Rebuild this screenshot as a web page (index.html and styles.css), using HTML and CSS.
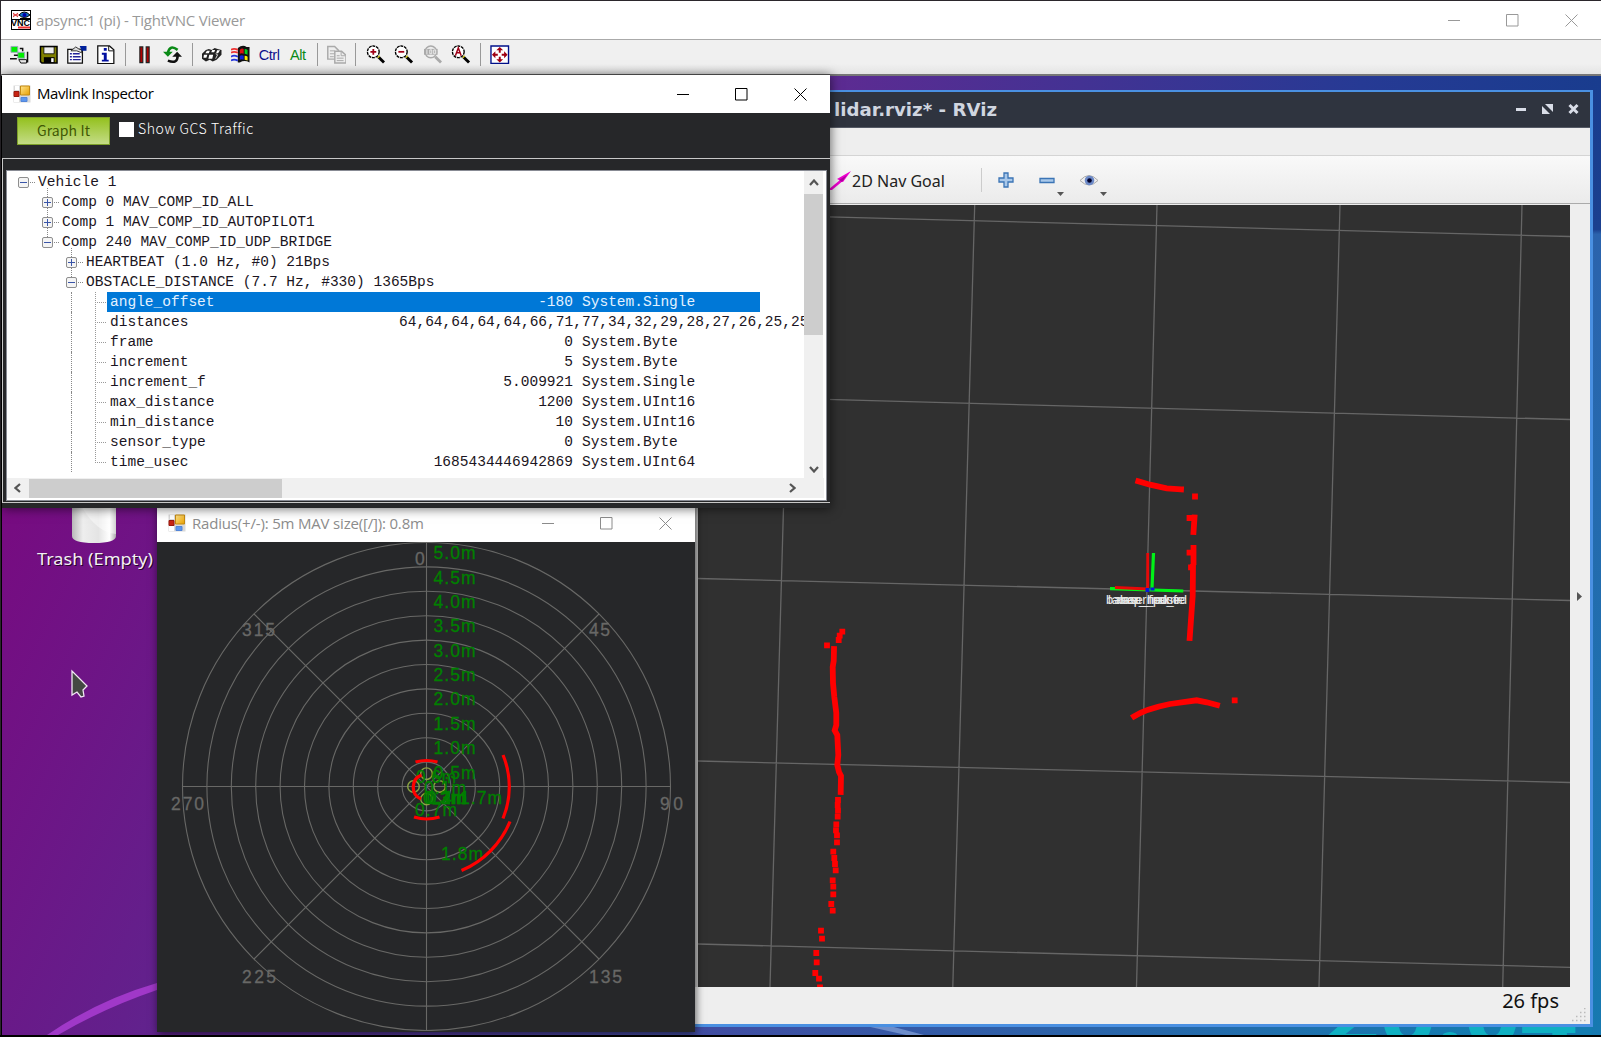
FILE: index.html
```html
<!DOCTYPE html>
<html lang="en">
<head>
<meta charset="utf-8">
<title>apsync:1 (pi) - TightVNC Viewer</title>
<link rel="stylesheet" href="styles.css">
</head>
<body>
<svg width="0" height="0" class="defs">
  <defs>
    <symbol id="min" viewBox="0 0 13 13"><path d="M0 6.5h12" stroke="currentColor" fill="none"/></symbol>
    <symbol id="max" viewBox="0 0 13 13"><path d="M.5 .5h11.5v11.5h-11.5z" stroke="currentColor" fill="none"/></symbol>
    <symbol id="close" viewBox="0 0 13 13"><path d="M.5 .5l12 12M12.5 .5l-12 12" stroke="currentColor" fill="none"/></symbol>
    <linearGradient id="gold" x2="1" y2="1"><stop stop-color="#ffe48c"/><stop offset="1" stop-color="#e8a000"/></linearGradient>
    <symbol id="form" viewBox="0 0 18 18">
      <path d="M.5 .5h17v17h-17z" fill="#d9d9d9"/><path d="M2 1h4v4h-4zM1 12h5v5h-5z" fill="#fff"/>
      <path d="M1 6.500h5v5h-5z" fill="#c82414" stroke="#961a10"/>
      <path d="M7.500 1h9v9h-9z" fill="url(#gold)" stroke="#c58a10"/>
      <path d="M8 12.500h6v4h-6z" fill="#5b96ee" stroke="#5285d8"/>
    </symbol>
    <symbol id="lens" viewBox="0 0 20 20">
      <path d="M12.500 12l6 6" stroke="currentColor" stroke-width="3"/><path d="M12 13l2-2" stroke="#d8cc20" stroke-width="1.500"/>
      <circle cx="7.500" cy="7" r="6" fill="#fff" stroke="currentColor" stroke-width="1.400" stroke-dasharray="3 .8"/>
    </symbol>
  </defs>
</svg>
<div class="viewer">
  <header class="titlebar viewer-title">
    <svg class="app-icon" width="20" height="20" viewBox="0 0 20 20"><path d="M0 0h20v20H0z" fill="#000"/><path d="M1 1h8v8H1zM9 1h10v7H9zM1 10h18v9H1z" fill="#fff"/><path d="M2 3l5 4M7 3L2 7M2 5h6" stroke="#d33"/><path d="M8 5q5-6 11 0q-6 5-11 0z" fill="#17c" stroke="#000"/><circle cx="13.500" cy="5" r="2" fill="#00a"/><text x="0" y="15.500" class="vnc" textLength="19">VNC</text><path d="M7 17.500h12" stroke="#e33" stroke-width="2"/></svg>
    <span class="viewer-name">apsync:1 (pi) - TightVNC Viewer</span>
    <div class="controls"><i><svg><use href="#min"/></svg></i><i><svg><use href="#max"/></svg></i><i><svg><use href="#close"/></svg></i></div>
  </header>
  <nav class="toolbar">
    <b><svg viewBox="0 0 20 20"><path d="M1 1.500h7v6H1zM8 7.500h7v6H8z" fill="#0e0" stroke="#9ab"/><path d="M0 14h7M4 10.500h4M10 3.500h3v3M18 7v11" stroke="#111" stroke-width="1.500" fill="none"/><path d="M9 15h8v3.500h-6z" fill="#e8e8e8" stroke="#111"/></svg></b>
    <b><svg viewBox="0 0 20 20"><path d="M1.500 1.500h17v17H3l-1.500-1.500z" fill="#808000" stroke="#000" stroke-width="1.500"/><path d="M5 2h10.500v7H5z" fill="#eee" stroke="#000" stroke-width=".8"/><path d="M5 12.500h11v6H5z" fill="#000"/><path d="M12.500 13.500h2.500v4h-2.500z" fill="#fff"/></svg></b>
    <b><svg viewBox="0 0 20 20"><path d="M.8 4.500h15v14H.8z" fill="#fff" stroke="#111" stroke-width="1.300"/><path d="M3 9h2m1 0h7M3 12h2m1 0h8M3 15h2m1 0h8" stroke="#229" stroke-width="1.500"/><path d="M4 6l5-4 3 2 3 1v3l-5-2z" fill="#ddd" stroke="#333"/><path d="M13 1h7v5h-5z" fill="#00209a"/></svg></b>
    <b><svg viewBox="0 0 20 20"><path d="M1.800 1h12l4.500 4v14H1.800z" fill="#fff" stroke="#111" stroke-width="1.300"/><path d="M13 1v5h5" fill="none" stroke="#111"/><path d="M8 3h3v3H8zM6 8h5v7h2v2H6v-2h2v-5H6z" fill="#000fa0"/></svg></b>
    <u></u>
    <b><svg viewBox="0 0 20 20"><path d="M5 2h3v16H5zM11.500 2h3v16h-3z" fill="#b00000" stroke="#222" stroke-width="1.200"/></svg></b>
    <b><svg viewBox="0 0 20 20"><path d="M15 5q-8-6-10 3" fill="none" stroke="#0a8a16" stroke-width="2.600"/><path d="M0 7h10l-5 5z" fill="#0a8a16"/><path d="M5 16q10 4 10-5" fill="none" stroke="#111" stroke-width="2.600"/><path d="M9.500 12l5-5 5 5z" fill="#111"/></svg></b>
    <u></u>
    <b><svg viewBox="0 0 20 20"><path d="M0 9l4-4 3-1 3 1 3-2 3 1 4 1v5l-5 5-4 2-3-2-4 2-4-3z" fill="#222"/><path d="M5 6h3l-1 2.500H3.500zM10.500 5h3l-1 2.500H9.500zM15.500 5.500h3l-2 3h-2zM2 10h3.500l-1 3H1.500zM7.500 10h4l-1 4H6.500z" fill="#fff"/><path d="M14 9l2 1-2 4" stroke="#ddd" fill="none"/></svg></b>
    <b><svg viewBox="0 0 20 20"><path d="M7 3q5-4 9-1h3v16q-5-3-10 0H7z" fill="#111"/><path d="M9 5q2-2 4-1v5q-2-1-4 0z" fill="#d11"/><path d="M14 4q2 0 3 1v5q-2-1-3-1z" fill="#0c2"/><path d="M9 11q2-1 4 0v4q-2-1-4 0z" fill="#12d"/><path d="M14 11q2 0 3 1v4q-2-1-3-1z" fill="#fe0"/><path d="M0 5q3-2 7 0M0 8q3-2 7 0" stroke="#e33" stroke-width="1.800" fill="none"/><path d="M0 12q3-2 7 0M0 16q3-2 7 0" stroke="#23d" stroke-width="1.800" fill="none"/></svg></b>
    <b class="ctrl">Ctrl</b>
    <b class="alt">Alt</b>
    <u></u>
    <b><svg viewBox="0 0 20 20"><path d="M.8 1.500h7l4 4v9h-11z" fill="#eee" stroke="#aaa" stroke-width="1.500"/><path d="M3 6h5M3 9h5M3 12h4" stroke="#aaa"/><path d="M8 6.500h7l4.500 4v8H8z" fill="#eee" stroke="#aaa" stroke-width="1.500"/><path d="M14.500 7v4h4.500M10 11h3M10 13.500h7M10 16h7" stroke="#aaa" fill="none"/></svg></b>
    <u></u>
    <b><svg viewBox="0 0 20 20"><use href="#lens"/><path d="M4.500 7h6M7.500 4v6" stroke="#a00018" stroke-width="1.800"/></svg></b>
    <b><svg viewBox="0 0 20 20"><use href="#lens"/><path d="M4.500 7h6" stroke="#a00018" stroke-width="1.800"/></svg></b>
    <b><svg viewBox="0 0 20 20"><path d="M12.500 12l6 6" stroke="#aaa" stroke-width="3"/><circle cx="8" cy="7" r="6" fill="#eee" stroke="#aaa" stroke-width="1.500"/><path d="M1 4h14v6H1z" fill="#aaa"/><path d="M4 4.500v5M7 5h2v4H7zM11 5h2v4h-2z" stroke="#eee" fill="none"/></svg></b>
    <b><svg viewBox="0 0 20 20"><use href="#lens"/><path d="M4.500 11l3-8 3 8M5.500 8h4" stroke="#a00018" stroke-width="1.500" fill="none"/></svg></b>
    <u></u>
    <b><svg viewBox="0 0 20 20"><path d="M1 1h18v18H1z" fill="#fff" stroke="#00108a" stroke-width="1.400"/><path d="M10 2l3.500 3.500h-7zM10 18l3.500-3.500h-7zM2 10l3.500-3.500v7zM18 10l-3.500-3.500v7z" fill="#a00012"/><path d="M10 4v4M10 12v4M4 10h4M12 10h4" stroke="#a00012" stroke-width="2"/></svg></b>
  </nav>
  <main class="desktop">
    <svg class="wallpaper" width="1599" height="959" viewBox="2 76 1599 959">
      <defs>
        <linearGradient id="wall" gradientUnits="userSpaceOnUse" x1="0" y1="480" x2="1420" y2="1180"><stop stop-color="#780a80"/><stop offset=".22" stop-color="#63208c"/><stop offset=".5" stop-color="#4647a0"/><stop offset="1" stop-color="#137cb0"/></linearGradient>
        <linearGradient id="wtop"><stop offset=".5" stop-color="#602a92"/><stop offset=".85" stop-color="#263a94"/><stop offset="1" stop-color="#193c8e"/></linearGradient>
        <linearGradient id="wside" x2="0" y2="1"><stop stop-color="#193c8e"/><stop offset=".16" stop-color="#1b408f"/><stop offset=".165" stop-color="#2b63ad"/><stop offset="1" stop-color="#1679b0"/></linearGradient>
        <linearGradient id="can"><stop stop-color="#b9b9b9"/><stop offset=".25" stop-color="#eee"/><stop offset=".6" stop-color="#e4e4e4"/><stop offset=".85" stop-color="#fff"/><stop offset="1" stop-color="#aaa"/></linearGradient>
      </defs>
      <path d="M2 76h1599v959H2z" fill="url(#wall)"/>
      <path d="M2 76h1599v16H2z" fill="url(#wtop)"/>
      <path d="M1592 76h9v959h-9z" fill="url(#wside)"/>
      <path d="M47 1035Q98 1000 157 983v7Q104 1008 58 1035z" fill="#a038c8"/>
      <path d="M866 1026h24l34 9h-18z" fill="#6d8dca"/>
      <text x="1323" y="1045" class="version" textLength="254" lengthAdjust="spacingAndGlyphs">20.04</text>
      <path d="M72 500h44v36q0 7-22 7t-22-7z" fill="url(#can)"/>
      <path d="M78 500q16 32 38 34v-34z" fill="#fff" opacity=".45"/>
      <path d="M72 671v24l5-3 4 5 3-1-1-6 4-4z" fill="#444843" stroke="#f2e6f4" stroke-width="1.300"/>
      <text x="38" y="566" class="trash-shadow" textLength="116" lengthAdjust="spacingAndGlyphs" aria-hidden="true">Trash (Empty)</text>
      <text x="37" y="565" class="trash" textLength="116" lengthAdjust="spacingAndGlyphs">Trash (Empty)</text>
    </svg>
  </main>
</div>

<section class="rviz">
  <header><span>lidar.rviz* - RViz</span>
    <svg width="64" height="12" viewBox="0 0 64 12"><path d="M0 5h10v3H0z"/><path d="M26 3v8h8zM37 9V1h-8z"/><path d="M53.500 2l8 8M61.500 2l-8 8" class="x"/></svg>
  </header>
  <div class="menu"></div>
  <div class="tools">
    <svg class="arrow" width="23" height="20" viewBox="0 0 23 20"><path d="M0 20L12 10" stroke="#f000d0" stroke-width="2.500"/><path d="M7 9l14-8-8 11z" fill="#f000d0"/><path d="M9 10l8-5-5 7z" fill="#b000a0"/></svg>
    <span>2D Nav Goal</span>
    <u></u>
    <svg class="plus" width="16" height="16" viewBox="0 0 16 16"><path d="M6 1h4v5h5v4h-5v5H6v-5H1V6h5z"/></svg>
    <svg class="minus" width="24" height="26" viewBox="0 0 24 26"><path d="M1 8.500h14v4H1z"/><path class="drop" d="M18 22h7l-3.500 4z"/></svg>
    <svg class="eye" width="28" height="26" viewBox="0 0 28 26"><path d="M1 10.500q9-10 18 0q-9 9-18 0z" fill="#eee" stroke="#aaa"/><circle cx="10.500" cy="10.500" r="4.800" fill="#6d8ac8"/><circle cx="10.500" cy="10.500" r="2.300" fill="#000028"/><path class="drop" d="M21 22h7l-3.500 4z"/></svg>
  </div>
  <div class="view">
    <svg width="872" height="782" viewBox="698 205 872 782">
      <path d="M698 205h872v782H698z" fill="#303030"/>
      <path class="grid" d="M792 205L770 987M974.700 205L952.800 987M1157 205L1136.500 987M1340 205L1319 987M1522 205L1502.700 987M698 213.500L1570 236.500M698 396L1570 419.500M698 578.500L1570 600.500M698 761L1570 782.500M698 944L1570 967.300"/>
      <g class="scan">
        <path d="M834 649L833.700 661 832.700 667 833 683 834.300 697 836.300 713 836.300 725 834.700 730.300 837.300 735 838.300 755 837.300 765 839 772 841 776 840.700 792"/>
        <path d="M842.300 631.700h0M839.700 635.700h0M838.700 640h0M827 645.300h0M838 800h0M837.700 805h0M838 810.700h0M837.700 816.700h0M836.300 824.300h0M836 830.300h0M837 835.300h0M837 842.300h0M833.300 851.700h0M834.300 858h0M835 864h0M835.700 870.300h0M832.700 880.300h0M833.300 886.700h0M833.300 894.300h0M831.300 904h0M832.700 910.700h0M821 930.700h0M822 938.700h0M816.300 953h0M816.700 962.300h0M815.300 973h0M819 978.700h0M820 987.500h0"/>
        <path d="M1138.300 481.300L1150 484.700 1166.700 488.300 1181 489.300M1195 496.500h0M1189.500 518h0M1194.500 517.500L1193.500 532M1193.500 548v14M1189.500 552.700h0M1191 567.300h0M1193 567L1192.700 596 1189.700 638M1134 716.300Q1145 709 1170 704L1196.700 700.300 1206.700 702.300 1217 705M1234.700 700.300h0"/>
      </g>
      <path d="M1110 588.700L1183.300 591M1153.500 553L1152 588" stroke="#00f218" stroke-width="3.200"/>
      <path d="M1115 587.500L1148 589M1147.700 553V589" stroke="#e80808" stroke-width="2.800"/>
      <path d="M1145.500 588h4v4h-4zM1150.500 587.500h4v3h-4z" fill="#0818d8"/>
      <g class="frames"><text x="1106" y="604" textLength="64">base_link</text><text x="1108" y="604" textLength="77">laser_frame</text><text x="1117" y="604" textLength="70">map_ned_frd</text><text x="1120" y="604" textLength="60">laser_pose</text></g>
    </svg>
    <svg class="expander" width="5" height="9" viewBox="0 0 5 9"><path d="M0 0l5 4.500L0 9z" fill="#555"/></svg>
  </div>
  <footer><span>26 fps</span><svg class="grip" width="14" height="14" viewBox="0 0 14 14"><path d="M0 12.500h14M4 8.500h10M8 4.500h6M12 .5h2" stroke="#bbb" stroke-width="1.500" stroke-dasharray="1.500 2.500"/></svg></footer>
</section>

<section class="window radar">
  <header class="titlebar">
    <svg class="form-icon" width="18" height="18"><use href="#form"/></svg><span class="radar-name">Radius(+/-): 5m MAV size([/]): 0.8m</span>
    <div class="controls"><i><svg><use href="#min"/></svg></i><i><svg><use href="#max"/></svg></i><i><svg><use href="#close"/></svg></i></div>
  </header>
  <svg width="538" height="489" viewBox="157 542 538 489">
    <g class="rings"><circle cx="426.500" cy="786.500" r="24.400"/><circle cx="426.500" cy="786.500" r="48.800"/><circle cx="426.500" cy="786.500" r="73.200"/><circle cx="426.500" cy="786.500" r="97.600"/><circle cx="426.500" cy="786.500" r="122"/><circle cx="426.500" cy="786.500" r="146.400"/><circle cx="426.500" cy="786.500" r="170.800"/><circle cx="426.500" cy="786.500" r="195.200"/><circle cx="426.500" cy="786.500" r="219.600"/><circle cx="426.500" cy="786.500" r="244"/>
    <path d="M182.500 786.500h488M426.500 542.500v488M254 614L599 959M599 614L254 959"/></g>
    <g class="bearing"><text x="415" y="564.500" textLength="10">0</text><text x="589" y="635.500" textLength="21">45</text><text x="660" y="810" textLength="23">90</text><text x="589" y="982.500" textLength="33">135</text><text x="242" y="982.500" textLength="34">225</text><text x="171" y="810" textLength="33">270</text><text x="242" y="635.500" textLength="33">315</text></g>
    <g class="copter"><circle cx="426.500" cy="773.700" r="5.800"/><circle cx="413.500" cy="786.500" r="5.800"/><circle cx="439.500" cy="786.500" r="5.800"/><circle cx="426.500" cy="799" r="5.800"/></g>
    <g class="range"><text x="433.500" y="558.500" textLength="42">5.0m</text><text x="433.500" y="583.500" textLength="42">4.5m</text><text x="433.500" y="607.500" textLength="42">4.0m</text><text x="433.500" y="632" textLength="42">3.5m</text><text x="433.500" y="656.500" textLength="42">3.0m</text><text x="433.500" y="681" textLength="42">2.5m</text><text x="433.500" y="705" textLength="42">2.0m</text><text x="433.500" y="730" textLength="42">1.5m</text><text x="433.500" y="753.500" textLength="42">1.0m</text><text x="433.500" y="778.500" textLength="42">0.5m</text>
    <text x="416" y="782.500" textLength="40">0.6m</text><text x="424" y="793.500" textLength="42">0.1m</text><text x="423" y="803.500" textLength="42">0.3m</text><text x="425" y="804" textLength="41">0.2m</text><text x="427" y="803.500" textLength="40">0.4m</text><text x="460" y="803.500" textLength="42">1.7m</text><text x="415" y="816" textLength="42">0.7m</text><text x="441" y="859.500" textLength="42">1.8m</text></g>
    <path class="hits" d="M415.500 762q11-3 22 0M414 817q12.500 4 25.500 0M421.500 775A13 13 0 0 0 421 799M503 755A83 83 0 0 1 503 818.500M510 821.500A91 91 0 0 1 461.500 870.500"/>
  </svg>
</section>

<section class="window inspector">
  <header class="titlebar">
    <svg class="form-icon" width="18" height="18"><use href="#form"/></svg><span class="inspector-name">Mavlink Inspector</span>
    <div class="controls"><i><svg><use href="#min"/></svg></i><i><svg><use href="#max"/></svg></i><i><svg><use href="#close"/></svg></i></div>
  </header>
  <div class="options"><button>Graph It</button><span class="check"></span><label>Show GCS Traffic</label></div>
  <div class="panel"><div class="tree-box">
    <ul class="tree">
      <li><em class="box"></em>Vehicle 1</li>
      <li class="l1"><em class="box add"></em>Comp 0 MAV_COMP_ID_ALL</li>
      <li class="l1"><em class="box add"></em>Comp 1 MAV_COMP_ID_AUTOPILOT1</li>
      <li class="l1"><em class="box"></em>Comp 240 MAV_COMP_ID_UDP_BRIDGE</li>
      <li class="l2"><em class="box add"></em>HEARTBEAT (1.0 Hz, #0) 21Bps</li>
      <li class="l2"><em class="box"></em>OBSTACLE_DISTANCE (7.7 Hz, #330) 1365Bps</li>
      <li class="l3"><p class="selected"><span>angle_offset</span><span>-180</span><span>System.Single</span></p></li>
      <li class="l3"><p class="wide"><span>distances</span><span>64,64,64,64,64,66,71,77,34,32,29,28,27,26,25,25</span></p></li>
      <li class="l3"><p><span>frame</span><span>0</span><span>System.Byte</span></p></li>
      <li class="l3"><p><span>increment</span><span>5</span><span>System.Byte</span></p></li>
      <li class="l3"><p><span>increment_f</span><span>5.009921</span><span>System.Single</span></p></li>
      <li class="l3"><p><span>max_distance</span><span>1200</span><span>System.UInt16</span></p></li>
      <li class="l3"><p><span>min_distance</span><span>10</span><span>System.UInt16</span></p></li>
      <li class="l3"><p><span>sensor_type</span><span>0</span><span>System.Byte</span></p></li>
      <li class="l3 last"><p><span>time_usec</span><span>1685434446942869</span><span>System.UInt64</span></p></li>
    </ul>
    <div class="vbar"><svg width="10" height="8" viewBox="0 0 10 8"><path d="M1 6l4-4.500L9 6"/></svg><div></div><svg width="10" height="8" viewBox="0 0 10 8"><path d="M1 2l4 4.500L9 2"/></svg></div>
    <div class="hbar"><svg width="8" height="10" viewBox="0 0 8 10"><path d="M6 1L1.500 5 6 9"/></svg><div></div><svg width="8" height="10" viewBox="0 0 8 10"><path d="M2 1l4.500 4L2 9"/></svg></div>
  </div></div>
</section>
</body>
</html>
```
FILE: styles.css
```css
* { box-sizing: border-box; }
body { margin: 0; width: 1601px; height: 1037px; overflow: hidden; position: relative; background: #000; font-family: "Open Sans", sans-serif; }
.defs { position: absolute; }
.viewer { width: 1601px; height: 1035px; border-top: 1px solid #2b272c; border-left: 1px solid #2b272c; display: flex; flex-direction: column; }
.titlebar { display: flex; align-items: center; background: #fff; font-size: 15px; white-space: nowrap; flex: none; }
.viewer-title { height: 38px; padding-left: 10px; color: #999; }
.viewer-name { margin-left: 5px; letter-spacing: -.2px; margin-top: -1px; }
.vnc { font: bold 9px "Liberation Sans", sans-serif; }
.controls { margin-left: auto; display: flex; color: inherit; }
.controls i { width: 58px; display: flex; padding-left: 22px; }
.controls i:last-child { width: 59px; padding-left: 23px; }
.controls svg { width: 13px; height: 13px; }
.toolbar { height: 37px; border-top: 1px solid #aaa; border-bottom: 2px solid #777; background: linear-gradient(#f0f0f0 70%, #e4e4e4); display: flex; align-items: center; padding: 0 0 5px 4.700px; flex: none; }
.toolbar b { width: 28.600px; display: flex; justify-content: center; font-weight: 400; font-size: 15px; color: #000; flex: none; }
.toolbar b svg { width: 19.500px; height: 19.500px; flex: none; }
.toolbar u { width: 10.200px; height: 23px; border-left: 1px solid #999; margin: 0 -4.500px 0 4.500px; flex: none; }
.toolbar .ctrl, .toolbar .alt { font-family: "Liberation Sans", sans-serif; font-size: 14.500px; color: #10108c; letter-spacing: -.5px; }
.toolbar .alt { color: #0a8a16; }
.desktop { flex: 1; padding-left: 1px; }
.wallpaper { display: block; }
.version { font: 700 84px "Noto Sans", sans-serif; fill: #0fb0c2; }
.trash, .trash-shadow { font: 17px "Noto Sans", sans-serif; fill: #f4eef6; }
.trash-shadow { fill: #220428; }

.rviz { position: absolute; left: 600px; top: 90px; width: 993px; height: 937px; border: solid #4a90e2; border-width: 2px 3px 3px; background: #eee; display: flex; flex-direction: column; }
.rviz header { height: 36px; background: #2f343f; border-bottom: 1px solid #555a66; display: flex; align-items: center; justify-content: space-between; padding: 0 10px 1px 231px; color: #d0d6e0; font: bold 18.200px "DejaVu Sans", sans-serif; }
.rviz header path { fill: #d9dde8; }
.rviz header .x { stroke: #d9dde8; stroke-width: 3; }
.menu { height: 28px; border-bottom: 1px solid #d4d4d4; }
.tools { height: 48px; background: linear-gradient(#f9f9f9, #ebebeb); border-bottom: 1px solid #aaa; display: flex; align-items: center; padding: 1px 0 0 227px; color: #222; font: 16px "Noto Sans", sans-serif; }
.tools span { width: 101px; margin: 1px 0 0 -1px; }
.tools u { height: 24px; border-left: 1px solid #ccc; margin: 0 16px 0 28px; }
.plus, .minus { fill: #a9c8ea; stroke: #3b74b5; stroke-width: 1.300px; }
.plus { margin-right: 25px; }
.minus { margin-right: 16px; overflow: visible; margin-top: 5px; }
.eye { margin-top: 5px; overflow: visible; }
.drop { fill: #555; stroke: none; }
.view { height: 782px; margin-top: 1px; padding-left: 92px; background: linear-gradient(90deg, transparent 92px, #c4c4c4 92px 96px, #eee 96px); display: flex; align-items: center; }
.view > svg { flex: none; margin-left: 3px; }
.view .expander { margin-left: 7px; }
.grid { stroke: #666; stroke-width: 1.300px; }
.scan { fill: none; stroke: #f00; stroke-width: 5.800px; }
.scan path { stroke-linecap: square; }
.frames { font: 13px "Liberation Sans", sans-serif; fill: #e8e8e8; }
.rviz footer { flex: 1; display: flex; justify-content: flex-end; padding: 0 4px 2px 0; font: 20px "Noto Sans", sans-serif; color: #111; }
.rviz footer span { line-height: 28px; margin-right: 13px; }
.grip { align-self: flex-end; }

.window { position: absolute; display: flex; flex-direction: column; background: #262729; }
.form-icon { margin-left: 11px; }
.radar { left: 157px; top: 504px; width: 538px; height: 528px; box-shadow: 1px 2px 8px rgba(0,0,0,.6); }
.radar .titlebar { height: 38px; color: #8c8c8c; }
.radar-name { margin-left: 6px; letter-spacing: -.18px; }
.rings { fill: none; stroke: #686866; stroke-width: 1.100px; }
.bearing, .range { font: 17.500px "Liberation Sans", sans-serif; fill: #686866; stroke: #686866; stroke-width: .3px; }
.range { fill: #008000; stroke: #008000; }
.copter { fill: none; stroke: #8ca642; stroke-width: 1.400px; }
.hits { fill: none; stroke: #f00; stroke-width: 3.200px; }

.inspector { left: 2px; top: 74px; width: 828px; height: 434px; border-top: 1px solid #444; box-shadow: 1px 1px 10px rgba(0,0,0,.55); }
.inspector .titlebar { height: 38px; color: #000; }
.inspector-name { margin: -2px 0 0 6px; letter-spacing: -.43px; }
.options { height: 45px; display: flex; padding: 4px 0 0 15px; font-family: "Noto Sans CJK JP", "Liberation Sans", sans-serif; font-size: 14px; color: #fff; }
.options button { width: 93px; height: 28px; border: 1px solid #7da028; padding: 0 0 2px; background: linear-gradient(#94c11f, #c4dc86); color: #405704; font: inherit; letter-spacing: .1px; }
.check { width: 15px; height: 15px; background: #fff; margin: 5px 4px 0 9px; }
.options label { line-height: 22px; font-weight: 300; letter-spacing: .6px; }
.panel { height: 345px; border: solid #c8c8c8; border-width: 1px 0 1px 1px; padding: 11px 3px 2px 3px; }
.tree-box { height: 331px; background: #fff; border: 1px solid #888b94; display: grid; grid-template: 307px 20px / 797px 20px; }
.tree { margin: 0; padding: 1px 0 0 11px; list-style: none; overflow: hidden; font: 14.520px/20px "Liberation Mono", monospace; color: #1b1522; }
.tree li { height: 20px; display: flex; align-items: center; position: relative; white-space: nowrap; }
.tree .l1 { padding-left: 24px; }
.tree .l2 { padding-left: 48px; }
.tree .l3 { padding-left: 77px; }
.box { width: 11px; height: 11px; border: 1px solid #8e8e8e; border-radius: 2px; margin-right: 9px; position: relative; flex: none; background: linear-gradient(90deg, #3a55a8, #3a55a8) center / 7px 1px no-repeat, #f4f4f4; }
.box.add { background: linear-gradient(#3a55a8, #3a55a8) center / 7px 1px no-repeat, linear-gradient(#3a55a8, #3a55a8) center / 1px 7px no-repeat, #f4f4f4; }
.box::after { content: ""; position: absolute; left: 11px; top: 4px; width: 5px; border-top: 1px dotted #888; }
.l1::before, .l2::before, .l3::before { content: ""; position: absolute; height: 9px; top: -4px; border-left: 1px dotted #888; left: 29px; }
.l2::before { left: 53px; }
.l3::before { left: 53px; top: 0; height: 20px; }
.l3::after { content: ""; position: absolute; left: 77px; top: 0; width: 11px; height: 20px; background: repeating-linear-gradient(90deg, #999 0 1px, transparent 1px 2px) 0 10px / 11px 1px no-repeat, repeating-linear-gradient(#999 0 1px, transparent 1px 2px) 0 0 / 1px 20px no-repeat; }
.l3.last::after { height: 11px; }
.tree p { margin: 0 0 0 12px; padding-left: 3px; width: 653px; height: 20px; display: grid; grid-template-columns: 130px 333px 1fr; flex: none; }
.tree p span:nth-child(2) { text-align: right; }
.tree p span:nth-child(3) { padding-left: 9px; }
.tree p.wide { grid-template-columns: 289px 1fr; }
.tree p.wide span:nth-child(2) { text-align: left; }
.tree .selected { background: #0078d7; color: #e4f2ff; }
.vbar, .hbar { background: #f0f0f0; display: flex; justify-content: space-between; align-items: center; }
.vbar { flex-direction: column; padding: 8px 0 5px; width: 19px; }
.vbar div { width: 19px; height: 141px; background: #cdcdcd; margin: 7px 0 auto; }
.hbar { grid-column: 1 / 3; padding: 0 28px 0 7px; }
.hbar div { width: 253px; height: 19px; background: #cdcdcd; margin: 0 auto 0 7px; }
.vbar path, .hbar path { fill: none; stroke: #555; stroke-width: 2.200px; }
```
